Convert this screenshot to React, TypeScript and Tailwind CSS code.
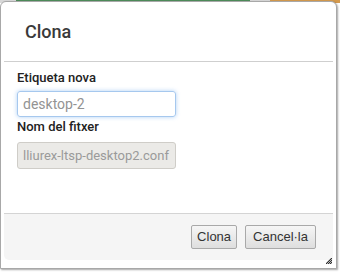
export default function App() {
  return (
    <div className="relative w-[340px] h-[272px] overflow-hidden bg-white">
      {/* page behind the dialog */}
      <div className="absolute left-0 top-0 flex h-[3px] w-full">
        <span className="w-[16px] bg-[#d8d8d8]" />
        <span className="w-[234px] bg-[#4e8c5a]" />
        <span className="w-[20px] bg-[#d8d8d8]" />
        <span className="flex-1 bg-[#d49a4e]" />
      </div>

      {/* dialog */}
      <div
        style={{ fontFamily: "Roboto, 'Liberation Sans', sans-serif" }}
        className="absolute left-0 top-[1px] flex h-[268px] w-[337px] flex-col rounded-t-[6px] border border-[#a8a8a8] bg-white shadow-[1px_1px_2px_rgba(0,0,0,0.35)]"
      >
        <div className="mx-[3px] flex h-[60px] shrink-0 items-center border-b border-[#cfcfcf] pl-[21px]">
          <h1 className="text-[18px] font-medium text-[#3a3a3a]">Clona</h1>
        </div>

        <div className="flex flex-1 flex-col px-[16px] pt-[7px]">
          <label className="text-[13px] font-medium leading-[18px] text-[#222]">Etiqueta nova</label>
          <div className="mt-[4px] flex h-[26px] w-[159px] items-center rounded-[3px] border border-[#a6c8ee] px-[5px] text-[14px] text-[#939393] shadow-[0_0_4px_rgba(80,150,230,0.45)]">
            desktop-2
          </div>
          <label className="mt-[1px] text-[13px] font-medium leading-[18px] text-[#222]">Nom del fitxer</label>
          <div className="mt-[6px] flex h-[27px] w-[159px] items-center overflow-hidden whitespace-nowrap rounded-[3px] border border-[#cfcdc8] bg-[#ebeae7] px-[5px] text-[13px] text-[#9a9a9a]">
            lliurex-ltsp-desktop2.conf
          </div>
        </div>

        <div className="relative mx-[3px] mb-[8px] flex h-[47px] shrink-0 items-center justify-end gap-[8px] rounded-bl-[5px] border-t border-[#d4d4d4] bg-[#f5f5f5] pr-[17px]">
          <button
            style={{ fontFamily: "'Liberation Sans', Arial, sans-serif" }}
            className="h-[24px] rounded-[2px] border border-[#a9a9a9] bg-gradient-to-b from-[#f6f6f6] to-[#dedede] px-[5px] text-[13px] text-[#333]"
          >
            Clona
          </button>
          <button
            style={{ fontFamily: "'Liberation Sans', Arial, sans-serif" }}
            className="h-[24px] rounded-[2px] border border-[#a9a9a9] bg-gradient-to-b from-[#f6f6f6] to-[#dedede] px-[7px] text-[13px] text-[#333]"
          >
            Cancel·la
          </button>
        </div>

        {/* resize grip */}
        <svg className="absolute right-[3px] bottom-[3px]" width="8" height="8" viewBox="0 0 8 8">
          <path d="M7 1L1 7M7 3L3 7M7 5L5 7" stroke="#333" strokeWidth="1" />
          <path d="M6 1L1 6M7 2L2 7M7 4L4 7M7 6L6 7" stroke="#888" strokeWidth="0.6" />
        </svg>
      </div>
    </div>
  );
}
